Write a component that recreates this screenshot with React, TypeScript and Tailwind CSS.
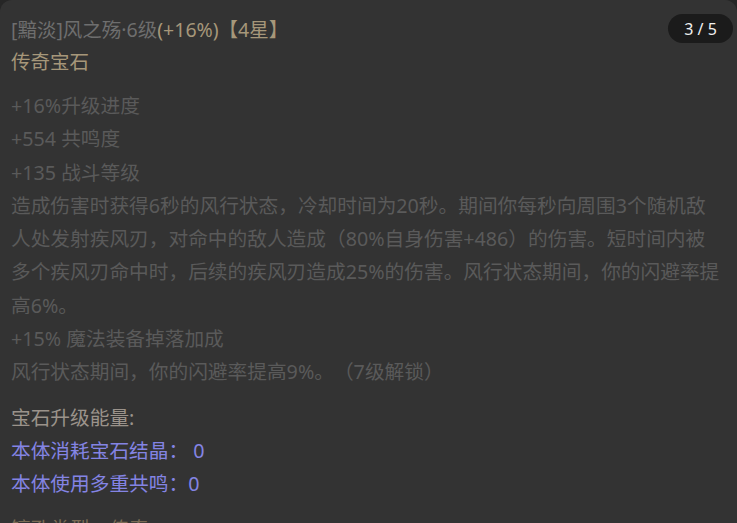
import React from "react";

const font = { fontFamily: '"Noto Sans", "Noto Sans CJK SC", sans-serif' };

export default function App() {
  return (
    <div className="h-[523px] w-[737px] overflow-hidden bg-[#262626] [text-spacing-trim:space-all]" style={font}>
      <div className="relative min-h-[620px] rounded-t-[12px] bg-[#333333] pl-[11px] pr-[16px] pt-[14px]">
        {/* page counter */}
        <div className="absolute right-[4px] top-[14px] flex h-[29px] w-[65px] items-center justify-center rounded-full bg-[#1b1b1b] text-[16px] text-[#f0f0f0]">
          3 / 5
        </div>

        {/* header */}
        <div className="text-[19.5px] leading-[32px]">
          <span className="text-[#6e6e6e]">[黯淡]风之殇·6级</span>
          <span className="text-[#a6977a]">(+16%)【4星】</span>
        </div>
        <div className="text-[19.5px] leading-[32px] text-[#a6977a]">传奇宝石</div>

        {/* stats and effect */}
        <div className="mt-[11px] text-[19.7px] leading-[33.3px] text-[#5a5a5a]">
          <div>+16%升级进度</div>
          <div>+554 共鸣度</div>
          <div>+135 战斗等级</div>
          <div>
            造成伤害时获得6秒的风行状态，冷却时间为20秒。期间你每秒向周围3个随机敌人处发射疾风刃，对命中的敌人造成（80%自身伤害+486）的伤害。短时间内被多个疾风刃命中时，后续的疾风刃造成25%的伤害。风行状态期间，你的闪避率提高6%。
          </div>
          <div>+15% 魔法装备掉落加成</div>
          <div>风行状态期间，你的闪避率提高9%。（7级解锁）</div>
        </div>

        {/* upgrade energy */}
        <div className="mt-[12px] text-[19.7px] leading-[33.3px]">
          <div className="text-[#9b938b]">宝石升级能量:</div>
          <div className="text-[#8484e4]">本体消耗宝石结晶： 0</div>
          <div className="text-[#8484e4]">本体使用多重共鸣：0</div>
        </div>

        <div className="mt-[11px] text-[19.7px] leading-[33.3px] text-[#7a6b55]">镶孔类型：传奇</div>
      </div>
    </div>
  );
}
